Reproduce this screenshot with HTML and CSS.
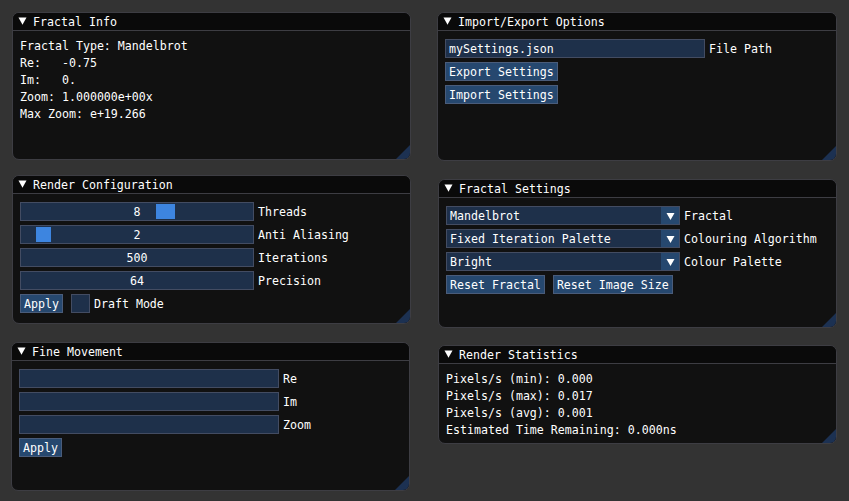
FILE: index.html
```html
<!DOCTYPE html>
<html>
<head>
<meta charset="utf-8">
<link rel="stylesheet" href="styles.css">
</head>
<body>

<div class="win w-info">
  <div class="title"><svg class="tri" width="13" height="13" viewBox="0 0 13 13"><polygon points="2.5,2.5 10.5,2.5 6.5,9.7" fill="#fff"/></svg><span class="ttext">Fractal Info</span></div>
  <div class="body">
    <div class="line">Fractal Type: Mandelbrot</div>
    <div class="line">Re:   -0.75</div>
    <div class="line">Im:   0.</div>
    <div class="line">Zoom: 1.000000e+00x</div>
    <div class="line">Max Zoom: e+19.266</div>
  </div>
  <svg class="grip" width="14" height="14" viewBox="0 0 14 14"><polygon points="14,0 14,14 0,14" fill="#1c3152"/></svg>
</div>

<div class="win w-render">
  <div class="title"><svg class="tri" width="13" height="13" viewBox="0 0 13 13"><polygon points="2.5,2.5 10.5,2.5 6.5,9.7" fill="#fff"/></svg><span class="ttext">Render Configuration</span></div>
  <div class="body">
    <div class="row"><div class="frame slider"><div class="grab" style="left:135px;width:19px"></div><span class="val">8</span></div><span class="label">Threads</span></div>
    <div class="row"><div class="frame slider"><div class="grab" style="left:15px;width:15px"></div><span class="val">2</span></div><span class="label">Anti Aliasing</span></div>
    <div class="row"><div class="frame slider"><span class="val">500</span></div><span class="label">Iterations</span></div>
    <div class="row"><div class="frame slider"><span class="val">64</span></div><span class="label">Precision</span></div>
    <div class="row"><div class="btn">Apply</div><div class="frame check"></div><span class="label">Draft Mode</span></div>
  </div>
  <svg class="grip" width="14" height="14" viewBox="0 0 14 14"><polygon points="14,0 14,14 0,14" fill="#1c3152"/></svg>
</div>

<div class="win w-fine">
  <div class="title"><svg class="tri" width="13" height="13" viewBox="0 0 13 13"><polygon points="2.5,2.5 10.5,2.5 6.5,9.7" fill="#fff"/></svg><span class="ttext">Fine Movement</span></div>
  <div class="body">
    <div class="row"><div class="frame input"></div><span class="label">Re</span></div>
    <div class="row"><div class="frame input"></div><span class="label">Im</span></div>
    <div class="row"><div class="frame input"></div><span class="label">Zoom</span></div>
    <div class="row"><div class="btn">Apply</div></div>
  </div>
  <svg class="grip" width="14" height="14" viewBox="0 0 14 14"><polygon points="14,0 14,14 0,14" fill="#1c3152"/></svg>
</div>

<div class="win w-io">
  <div class="title"><svg class="tri" width="13" height="13" viewBox="0 0 13 13"><polygon points="2.5,2.5 10.5,2.5 6.5,9.7" fill="#fff"/></svg><span class="ttext">Import/Export Options</span></div>
  <div class="body">
    <div class="row"><div class="frame input">mySettings.json</div><span class="label">File Path</span></div>
    <div class="row"><div class="btn">Export Settings</div></div>
    <div class="row"><div class="btn">Import Settings</div></div>
  </div>
  <svg class="grip" width="14" height="14" viewBox="0 0 14 14"><polygon points="14,0 14,14 0,14" fill="#1c3152"/></svg>
</div>

<div class="win w-fset">
  <div class="title"><svg class="tri" width="13" height="13" viewBox="0 0 13 13"><polygon points="2.5,2.5 10.5,2.5 6.5,9.7" fill="#fff"/></svg><span class="ttext">Fractal Settings</span></div>
  <div class="body">
    <div class="row"><div class="frame combo"><span class="combo-text">Mandelbrot</span><span class="combo-arrow"><svg width="18" height="17" viewBox="0 0 18 17"><polygon points="5.5,6 13.5,6 9.5,13" fill="#fff"/></svg></span></div><span class="label">Fractal</span></div>
    <div class="row"><div class="frame combo"><span class="combo-text">Fixed Iteration Palette</span><span class="combo-arrow"><svg width="18" height="17" viewBox="0 0 18 17"><polygon points="5.5,6 13.5,6 9.5,13" fill="#fff"/></svg></span></div><span class="label">Colouring Algorithm</span></div>
    <div class="row"><div class="frame combo"><span class="combo-text">Bright</span><span class="combo-arrow"><svg width="18" height="17" viewBox="0 0 18 17"><polygon points="5.5,6 13.5,6 9.5,13" fill="#fff"/></svg></span></div><span class="label">Colour Palette</span></div>
    <div class="row btns"><div class="btn">Reset Fractal</div><div class="btn">Reset Image Size</div></div>
  </div>
  <svg class="grip" width="14" height="14" viewBox="0 0 14 14"><polygon points="14,0 14,14 0,14" fill="#1c3152"/></svg>
</div>

<div class="win w-stats">
  <div class="title"><svg class="tri" width="13" height="13" viewBox="0 0 13 13"><polygon points="2.5,2.5 10.5,2.5 6.5,9.7" fill="#fff"/></svg><span class="ttext">Render Statistics</span></div>
  <div class="body">
    <div class="line">Pixels/s (min): 0.000</div>
    <div class="line">Pixels/s (max): 0.017</div>
    <div class="line">Pixels/s (avg): 0.001</div>
    <div class="line">Estimated Time Remaining: 0.000ns</div>
  </div>
  <svg class="grip" width="14" height="14" viewBox="0 0 14 14"><polygon points="14,0 14,14 0,14" fill="#1c3152"/></svg>
</div>

</body>
</html>
```

FILE: styles.css
```css
* { box-sizing: border-box; }
html, body { margin: 0; padding: 0; }
body {
  width: 849px;
  height: 501px;
  position: relative;
  overflow: hidden;
  background: #333333;
  color: #ffffff;
  font-family: "DejaVu Sans Mono", "Liberation Mono", monospace;
  font-size: 11.627px;
  line-height: 13px;
}

.win {
  position: absolute;
  background: #111111;
  border: 1px solid #3d3d43;
  border-radius: 7px;
  overflow: hidden;
  display: flex;
  flex-direction: column;
}
.w-info  { left: 12px;  top: 12px;  width: 399px; height: 148px; }
.w-render{ left: 12px;  top: 175px; width: 399px; height: 149px; }
.w-fine  { left: 11px;  top: 342px; width: 399px; height: 149px; }
.w-io    { left: 437px; top: 12px;  width: 400px; height: 149px; }
.w-fset  { left: 438px; top: 179px; width: 399px; height: 149px; }
.w-stats { left: 438px; top: 345px; width: 399px; height: 99px; }

.title {
  flex: none;
  height: 18px;
  background: #0a0a0a;
  border-bottom: 1px solid #3d3d43;
  display: flex;
  align-items: flex-start;
  gap: 4px;
  padding: 2px 0 0 3px;
  white-space: pre;
}
.tri { flex: none; display: block; }
.ttext { line-height: 15px; height: 13px; }

.body {
  padding: 8px 7px;
  display: flex;
  flex-direction: column;
  gap: 4px;
}
.line { height: 13px; line-height: 15px; white-space: pre; }

.row {
  display: flex;
  align-items: center;
  height: 19px;
}
.btns { gap: 8px; }

.frame {
  flex: none;
  height: 19px;
  border: 1px solid #434c62;
  background: #1e304a;
  position: relative;
  line-height: 19px;
  white-space: pre;
  overflow: hidden;
}
.slider { width: 234px; text-align: center; }
.grab {
  position: absolute;
  top: 1px;
  height: 15px;
  background: #3d85e0;
}
.val { position: relative; }

.input { width: 260px; padding-left: 3px; }

.combo { width: 234px; display: flex; }
.combo-text { flex: 1; padding-left: 3px; }
.combo-arrow { flex: none; width: 18px; height: 17px; background: #26486f; }
.combo-arrow svg { display: block; }

.check { width: 19px; margin-left: 8px; }

.label { margin-left: 4px; white-space: pre; line-height: 21px; height: 19px; }

.btn {
  flex: none;
  height: 19px;
  border: 1px solid #4a5c7a;
  background: #26486f;
  padding: 0 3px;
  line-height: 19px;
  white-space: pre;
  overflow: hidden;
}

.grip {
  position: absolute;
  right: 0;
  bottom: 0;
  display: block;
}
```
